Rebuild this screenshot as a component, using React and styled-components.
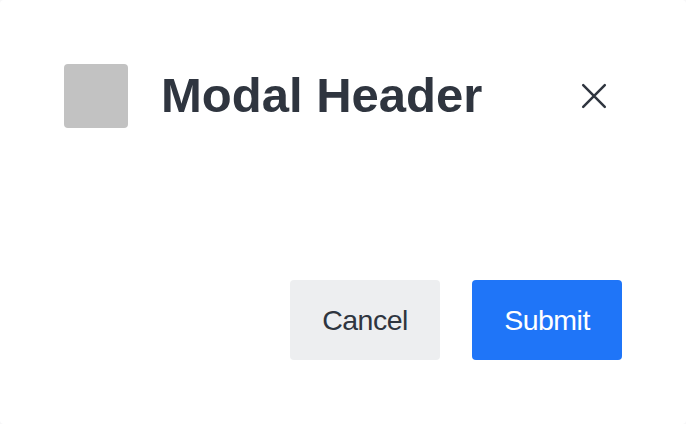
import React from 'react';
import styled, { createGlobalStyle } from 'styled-components';

const GlobalStyle = createGlobalStyle`
  *, *::before, *::after { box-sizing: border-box; }
  body { margin: 0; background: #f7f7f8; font-family: "Liberation Sans", Arial, sans-serif; }
`;

const Modal = styled.section`
  display: flex;
  flex-direction: column;
  justify-content: space-between;
  width: 686px;
  height: 424px;
  padding: 64px;
  border-radius: 4px;
  background: #fff;
`;

const Header = styled.header`
  display: flex;
  align-items: center;
  height: 64px;
`;

const Thumbnail = styled.div`
  width: 64px;
  height: 64px;
  border-radius: 4px;
  background: #c2c2c2;
`;

const Title = styled.h1`
  flex: 1;
  margin: 0 0 0 32px;
  padding: 0 0 2px 1px;
  color: #2f353f;
  font-size: 49px;
  font-weight: 700;
  line-height: 62px;
  white-space: nowrap;
`;

const CloseButton = styled.button`
  display: flex;
  width: 56px;
  height: 64px;
  padding: 0;
  border: 0;
  background: none;
  color: #2f353f;
`;

const Footer = styled.footer`
  display: flex;
  justify-content: flex-end;
  gap: 32px;
`;

const Button = styled.button`
  width: 150px;
  height: 80px;
  padding: 0;
  border: 0;
  border-radius: 4px;
  background: ${({ $primary }) => ($primary ? '#1f75f8' : '#edeef0')};
  color: ${({ $primary }) => ($primary ? '#fff' : '#2f353f')};
  font-family: inherit;
  font-size: 28.5px;
  letter-spacing: -0.5px;
  line-height: 38px;
`;

export default function App() {
  return (
    <>
      <GlobalStyle />
      <Modal role="dialog" aria-labelledby="modal-title">
        <Header>
          <Thumbnail />
          <Title id="modal-title">Modal Header</Title>
          <CloseButton aria-label="Close">
            <svg width="56" height="64" viewBox="0 0 56 64" fill="none" stroke="currentColor" strokeWidth="2.5" strokeLinecap="round">
              <path d="M17.2 21.2L38.8 42.8M38.8 21.2L17.2 42.8" />
            </svg>
          </CloseButton>
        </Header>
        <Footer>
          <Button>Cancel</Button>
          <Button $primary>Submit</Button>
        </Footer>
      </Modal>
    </>
  );
}
